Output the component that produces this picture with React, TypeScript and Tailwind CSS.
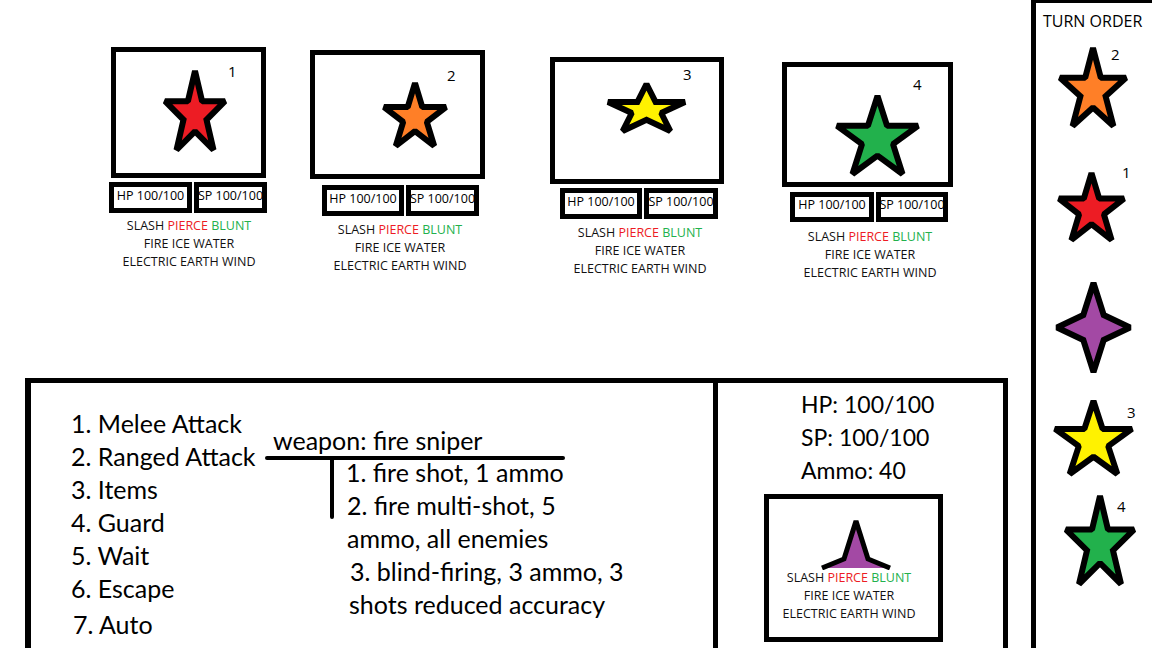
// Battle screen mockup — enemy cards, action menu, player stats, turn order

type Pt = [number, number];

const RED = "#ed1c24";
const ORANGE = "#ff7f27";
const YELLOW = "#fff200";
const GREEN = "#22b14c";
const PURPLE = "#a349a4";

const STAR5: Pt[] = [
  [0.5, 0], [0.618, 0.382], [1, 0.382], [0.691, 0.618], [0.809, 1],
  [0.5, 0.764], [0.191, 1], [0.309, 0.618], [0, 0.382], [0.382, 0.382],
];

const A4 = 0.14;
const STAR4: Pt[] = [
  [0.5, 0], [0.5 + A4, 0.5 - A4], [1, 0.5], [0.5 + A4, 0.5 + A4],
  [0.5, 1], [0.5 - A4, 0.5 + A4], [0, 0.5], [0.5 - A4, 0.5 - A4],
];

function Star({ w, h, color, shape = STAR5 }: { w: number; h: number; color: string; shape?: Pt[] }) {
  const p = 3;
  const points = shape
    .map(([x, y]) => `${(p + x * (w - 2 * p)).toFixed(1)},${(p + y * (h - 2 * p)).toFixed(1)}`)
    .join(" ");
  return (
    <svg width={w} height={h} viewBox={`0 0 ${w} ${h}`} className="block overflow-visible">
      <polygon points={points} fill={color} stroke="#000" strokeWidth={6} strokeLinejoin="miter" strokeMiterlimit={1.2} />
    </svg>
  );
}

// ─── Enemy card ───────────────────────────────────────────────────────────────

interface CardCfg {
  n: number;
  color: string;
  w: number;
  top: number;
  boxMl: number;
  boxW: number;
  boxH: number;
  star: { ml: number; mt: number; w: number; h: number };
  num: { left: number; top: number };
  statMl: number;
  statMt: number;
  statH: number;
  hpW: number;
  spW: number;
  textMt: number;
}

const CARDS: CardCfg[] = [
  { n: 1, color: RED, w: 158, top: 47, boxMl: 2, boxW: 155, boxH: 131, star: { ml: 46, mt: 16, w: 66, h: 85 }, num: { left: 112, top: 12 }, statMl: 0, statMt: 4, statH: 31, hpW: 83, spW: 73, textMt: 4 },
  { n: 2, color: ORANGE, w: 175, top: 50, boxMl: 0, boxW: 175, boxH: 129, star: { ml: 66, mt: 25, w: 68, h: 69 }, num: { left: 132, top: 13 }, statMl: 12, statMt: 6, statH: 31, hpW: 82, spW: 73, textMt: 5 },
  { n: 3, color: YELLOW, w: 174, top: 57, boxMl: 0, boxW: 174, boxH: 127, star: { ml: 50, mt: 19, w: 83, h: 53 }, num: { left: 128, top: 5 }, statMl: 10, statMt: 4, statH: 31, hpW: 82, spW: 74, textMt: 5 },
  { n: 4, color: GREEN, w: 171, top: 62, boxMl: 0, boxW: 171, boxH: 125, star: { ml: 47, mt: 26, w: 87, h: 84 }, num: { left: 126, top: 10 }, statMl: 8, statMt: 5, statH: 30, hpW: 84, spW: 72, textMt: 6 },
];

const CARD_GAPS = ["ml-[109px]", "ml-[43px]", "ml-[65px]", "ml-[58px]"];
const TEXT_PAD = ["pl-[2px]", "pl-[5px]", "pl-[6px]", "pl-[5px]"];

function Affinities({ className = "" }: { className?: string }) {
  return (
    <div className={`text-[12.5px] leading-[18px] text-center whitespace-nowrap text-[#111] ${className}`}>
      <div>
        SLASH <span className="text-[#ed1c24]">PIERCE</span> <span className="text-[#22b14c]">BLUNT</span>
      </div>
      <div>FIRE ICE WATER</div>
      <div>ELECTRIC EARTH WIND</div>
    </div>
  );
}

function StatBox({ label, w, h }: { label: string; w: number; h: number }) {
  return (
    <div
      className="border-[5px] border-black flex items-center justify-center pb-[3px] text-[12.5px] whitespace-nowrap"
      style={{ width: w, height: h }}
    >
      {label}
    </div>
  );
}

function EnemyCard({ c, i }: { c: CardCfg; i: number }) {
  return (
    <div className={`flex flex-col shrink-0 ${CARD_GAPS[i]}`} style={{ width: c.w, marginTop: c.top }}>
      <div
        className="relative border-[5px] border-black"
        style={{ width: c.boxW, height: c.boxH, marginLeft: c.boxMl }}
      >
        <div style={{ marginLeft: c.star.ml, paddingTop: c.star.mt }}>
          <Star w={c.star.w} h={c.star.h} color={c.color} />
        </div>
        <span className="absolute text-[15px] leading-[15px]" style={{ left: c.num.left, top: c.num.top }}>
          {c.n}
        </span>
      </div>
      <div className="flex gap-[2px]" style={{ marginLeft: c.statMl, marginTop: c.statMt }}>
        <StatBox label="HP 100/100" w={c.hpW} h={c.statH} />
        <StatBox label="SP 100/100" w={c.spW} h={c.statH} />
      </div>
      <div style={{ marginTop: c.textMt }}>
        <Affinities className={TEXT_PAD[i]} />
      </div>
    </div>
  );
}

// ─── Turn order ───────────────────────────────────────────────────────────────

function TurnOrder() {
  return (
    <aside className="relative flex-1 flex flex-col border-l-[5px] border-t-[3px] border-black">
      <div className="mt-[8px] pl-[7px] text-[16px] leading-[20px] whitespace-nowrap">TURN ORDER</div>
      <div className="ml-[21px] mt-[14px]"><Star w={72} h={84} color={ORANGE} /></div>
      <div className="ml-[20px] mt-[41px]"><Star w={71} h={73} color={RED} /></div>
      <div className="ml-[18px] mt-[37px]"><Star w={79} h={95} color={PURPLE} shape={STAR4} /></div>
      <div className="ml-[16px] mt-[23px]"><Star w={83} h={79} color={YELLOW} /></div>
      <div className="ml-[27px] mt-[16px]"><Star w={74} h={94} color={GREEN} /></div>

      <span className="absolute left-[75px] top-[44px] text-[15px] leading-[15px]">2</span>
      <span className="absolute left-[86px] top-[162px] text-[15px] leading-[15px]">1</span>
      <span className="absolute left-[91px] top-[402px] text-[15px] leading-[15px]">3</span>
      <span className="absolute left-[81px] top-[496px] text-[15px] leading-[15px]">4</span>
    </aside>
  );
}

// ─── Bottom command panel ─────────────────────────────────────────────────────

const MENU = ["1. Melee Attack", "2. Ranged Attack", "3. Items", "4. Guard", "5. Wait", "6. Escape"];

function CommandPanel() {
  return (
    <div className="ml-[25px] w-[983px] flex-1 flex border-l-[6px] border-t-[5px] border-r-[5px] border-black font-[Lato,sans-serif] text-[25px] leading-[33px]">
      {/* action list + weapon submenu */}
      <div className="w-[687px] shrink-0 flex border-r-[5px] border-black">
        <ul className="w-[234px] shrink-0 pl-[40px] pt-[24px] whitespace-nowrap">
          {MENU.map((m) => (
            <li key={m}>{m}</li>
          ))}
          <li className="mt-[3px] pl-[2px]">7. Auto</li>
        </ul>
        <div className="mt-[41px] flex flex-col whitespace-nowrap">
          <div className="pl-[8px] leading-[32px]">weapon: fire sniper</div>
          <div className="w-[300px] h-[4px] bg-black rounded-full" />
          <div className="flex">
            <div className="ml-[65px] w-[4px] h-[59px] bg-black rounded-b-full" />
            <div className="ml-[12px] -mt-[4px]">
              <div>1. fire shot, 1 ammo</div>
              <div className="pl-[1px]">2. fire multi-shot, 5</div>
              <div className="pl-[1px]">ammo, all enemies</div>
              <div className="pl-[4px]">3. blind-firing, 3 ammo, 3</div>
              <div className="pl-[3px]">shots reduced accuracy</div>
            </div>
          </div>
        </div>
      </div>

      {/* player stats */}
      <div className="flex-1 flex flex-col text-[23px]">
        <div className="pl-[83px] pt-[5px] whitespace-nowrap">
          <div>HP: 100/100</div>
          <div>SP: 100/100</div>
          <div>Ammo: 40</div>
        </div>
        <div className="ml-[46px] mt-[7px] w-[179px] h-[148px] border-[5px] border-black flex flex-col font-['Open_Sans',sans-serif]">
          <svg width={70} height={52} viewBox="0 0 70 52" className="block ml-[52px] mt-[19px]">
            <polyline
              points="1,50 23,41 35,3 47,41 69,50"
              fill={PURPLE}
              stroke="#000"
              strokeWidth={5}
              strokeLinejoin="miter"
              strokeMiterlimit={1.2}
            />
          </svg>
          <Affinities className="-mt-[1px] pr-[9px]" />
        </div>
      </div>
    </div>
  );
}

export default function App() {
  return (
    <div className="w-[1152px] h-[648px] bg-white text-black flex overflow-hidden font-['Open_Sans',sans-serif]">
      <div className="w-[1031px] shrink-0 flex flex-col">
        <div className="h-[378px] shrink-0 flex items-start">
          {CARDS.map((c, i) => (
            <EnemyCard key={c.n} c={c} i={i} />
          ))}
        </div>
        <CommandPanel />
      </div>
      <TurnOrder />
    </div>
  );
}
